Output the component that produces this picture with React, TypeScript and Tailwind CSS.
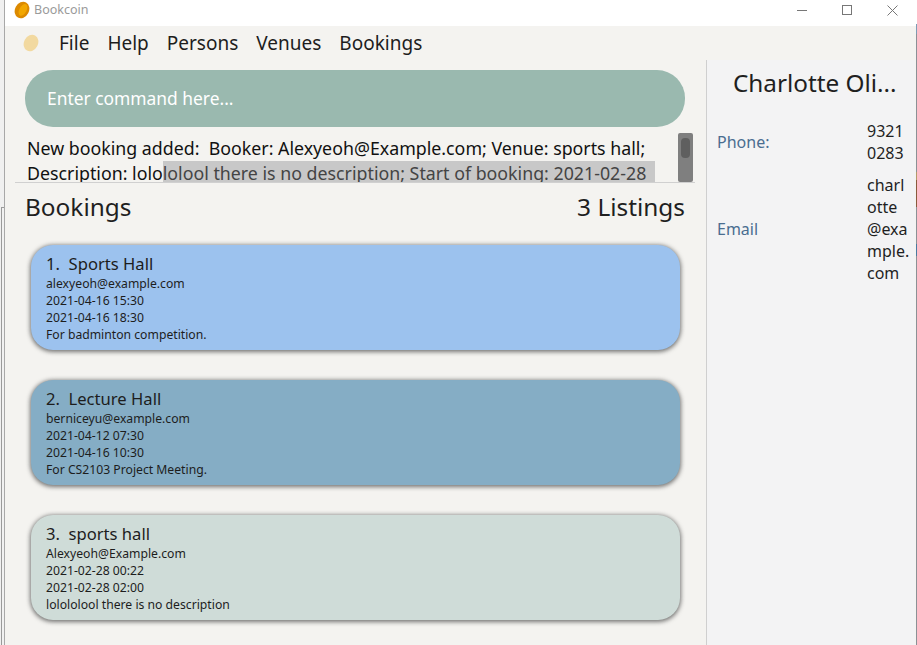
import React from 'react';

const font = { fontFamily: '"Noto Sans", "Open Sans", sans-serif' };

const bookings = [
  { title: '1.  Sports Hall', email: 'alexyeoh@example.com', start: '2021-04-16 15:30', end: '2021-04-16 18:30', desc: 'For badminton competition.', color: 'bg-[#9cc2ee]' },
  { title: '2.  Lecture Hall', email: 'berniceyu@example.com', start: '2021-04-12 07:30', end: '2021-04-16 10:30', desc: 'For CS2103 Project Meeting.', color: 'bg-[#85adc5]' },
  { title: '3.  sports hall', email: 'Alexyeoh@Example.com', start: '2021-02-28 00:22', end: '2021-02-28 02:00', desc: 'lolololool there is no description', color: 'bg-[#cfdcd8]' },
];

const Coin = ({ pale }: { pale?: boolean }) => (
  <svg width="18" height="18" viewBox="0 0 18 18">
    <ellipse cx="9" cy="9" rx="7" ry="8.6" transform="rotate(28 9 9)" fill={pale ? '#f2d9a0' : '#dc8a00'} />
    {!pale && <ellipse cx="9.8" cy="8.4" rx="3.6" ry="6.4" transform="rotate(28 9 9)" fill="#f2a700" />}
  </svg>
);

const BookingCard = ({ b }: { b: (typeof bookings)[number] }) => (
  <div className={`h-[105px] w-[649px] rounded-[22px] ${b.color} pl-[15px] pt-[8px] text-[#1d1d1d] shadow-[0_1px_4px_1px_rgba(50,50,50,0.65)]`}>
    <div className="mb-px whitespace-pre text-[16.6px] leading-[21px]">{b.title}</div>
    <div className="text-[12.2px] leading-[17px]">{b.email}</div>
    <div className="text-[12.2px] leading-[17px]">{b.start}</div>
    <div className="text-[12.2px] leading-[17px]">{b.end}</div>
    <div className="text-[12.2px] leading-[17px]">{b.desc}</div>
  </div>
);

export default function App() {
  return (
    <div className="flex h-[645px] w-[917px] overflow-hidden bg-white text-[#1f1f1f]" style={font}>
      <div className="flex w-[4px] flex-col bg-[#f0f0f0]">
        <div className="h-[207px]" />
        <div className="ml-[1px] flex-1 border-l border-t border-[#9a9a9a] bg-[#f1f1f1]" />
      </div>
      <div className="flex min-w-0 flex-1 flex-col border-l border-[#a8a8a8]">
        <div className="flex h-[26px] bg-white">
          <div className="ml-[8px] mt-[1px]"><Coin /></div>
          <span className="ml-[3px] mt-[1px] text-[12.5px] leading-[18px] text-[#9a9a9a]">Bookcoin</span>
          <div className="ml-auto flex h-[20px] items-center gap-[35px] pr-[18px]">
            <div className="h-px w-[10px] bg-[#777]" />
            <div className="h-[10px] w-[10px] border border-[#777]" />
            <svg width="11" height="11" viewBox="0 0 11 11"><path d="M0.5 0.5 L10.5 10.5 M10.5 0.5 L0.5 10.5" stroke="#777" strokeWidth="1" /></svg>
          </div>
        </div>
        <div className="flex flex-1 bg-[#f4f3f0]">
          <div className="flex w-[701px] flex-col">
            <div className="flex h-[34px] items-center">
              <div className="ml-[17px]"><Coin pale /></div>
              <div className="ml-[19px] flex gap-[18px] text-[19px] text-[#1d1d1d]">
                <span>File</span><span>Help</span><span>Persons</span><span>Venues</span><span>Bookings</span>
              </div>
            </div>
            <div className="ml-[20px] mt-[10px] flex h-[57px] w-[660px] items-center rounded-[28px] bg-[#9ab9af] pl-[22px] text-[17.4px] text-white">Enter command here...</div>
            <div className="relative ml-[10px] mt-[6px] h-[50px] w-[680px] border-b border-[#d0d0d0]">
              <div className="h-full overflow-hidden whitespace-nowrap pl-[12px] pt-[3px] text-[17.8px] leading-[25px] text-[#111]">
                <div>New booking added:&nbsp; Booker: Alexyeoh@Example.com; Venue: sports hall;</div>
                <div>Description: lolo<span className="inline-block h-[25px] bg-[#c8c8c8] pr-[9px] text-[#444]">lolool there is no description; Start of booking: 2021-02-28</span></div>
              </div>
              <div className="absolute right-[2px] top-0 h-[49px] w-[15px] rounded-[2px] bg-[#7f7f7f] px-[3px] pt-[5px]">
                <div className="h-[20px] w-full rounded-[4px] bg-[#5f5f5f]" />
              </div>
            </div>
            <div className="flex items-center justify-between pl-[20px] pr-[21px] pt-[6px] text-[24.4px] leading-[36px]">
              <span>Bookings</span>
              <span>3 Listings</span>
            </div>
            <div className="ml-[26px] mt-[20px] flex w-[650px] flex-col gap-[30px]">
              {bookings.map((b) => <BookingCard key={b.title} b={b} />)}
            </div>
          </div>
          <div className="mt-[34px] flex w-[209px] flex-col border-l border-[#cfcfcf] bg-[#f3f3f4]">
            <div className="pl-[26px] pt-[5px] text-[24.3px] leading-[36px]">Charlotte Oli...</div>
            <div className="mt-[19px] flex items-center">
              <span className="w-[160px] pl-[10px] text-[16px] text-[#4a6d90]">Phone:</span>
              <div className="text-[16px] leading-[22px]">9321<br />0283</div>
            </div>
            <div className="mt-[10px] flex items-center">
              <span className="w-[160px] pl-[10px] text-[16px] text-[#4a6d90]">Email</span>
              <div className="text-[16px] leading-[22px]">charl<br />otte<br />@exa<br />mple.<br />com</div>
            </div>
          </div>
        </div>
      </div>
      <div className="flex w-px flex-col bg-[#8b9096]">
        <div className="h-[24px] bg-white" />
        <div className="h-[10px] bg-[#7d9cb5]" />
        <div className="h-[138px]" />
        <div className="h-[8px] bg-[#b39a6a]" />
        <div className="h-[27px] bg-[#8a5a3c]" />
        <div className="h-[37px]" />
        <div className="h-[12px] bg-[#4a7aa0]" />
      </div>
    </div>
  );
}
